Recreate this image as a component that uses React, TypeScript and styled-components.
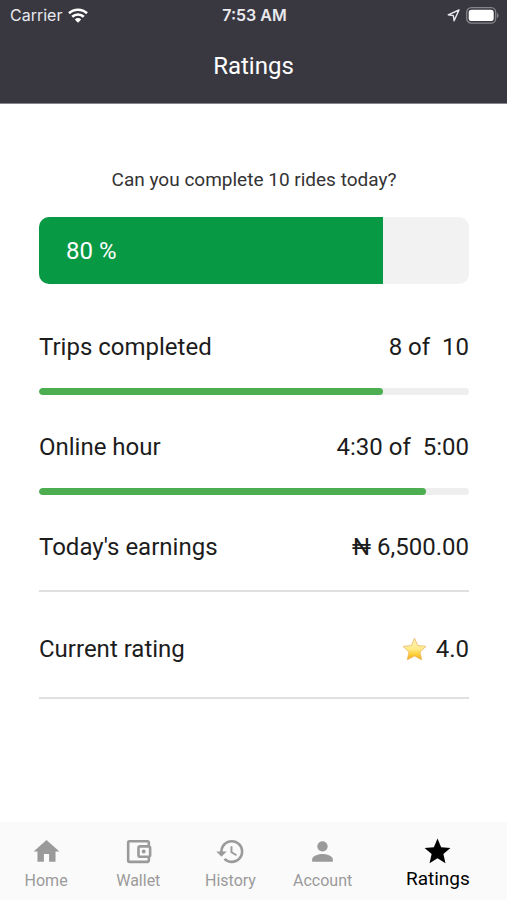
import React from "react";
import styled, { createGlobalStyle } from "styled-components";
import {
  MdHistory,
  MdHome,
  MdOutlineAccountBalanceWallet,
  MdPerson,
  MdStar,
} from "react-icons/md";

const GlobalStyle = createGlobalStyle`
  *, *::before, *::after { box-sizing: border-box; }
  body {
    margin: 0;
    background: #ffffff;
    color: #1c1c1c;
    font-family: Roboto, "Liberation Sans", sans-serif;
  }
`;

const Screen = styled.div`
  display: flex;
  flex-direction: column;
  min-height: 100vh;
`;

const Header = styled.header`
  background: #393841;
  color: #ffffff;
  border-bottom: 1px solid #85848b;
`;

const StatusBar = styled.div`
  display: grid;
  grid-template-columns: 1fr auto 1fr;
  align-items: center;
  height: 30px;
  padding: 0 8px 0 10px;
  font-family: Inter, sans-serif;
  font-size: 16px;
  line-height: 20px;
  color: #e9e9ee;
`;

const StatusGroup = styled.div<{ $end?: boolean }>`
  display: flex;
  align-items: center;
  gap: 6px;
  justify-content: ${(p) => (p.$end ? "flex-end" : "flex-start")};
`;

const Clock = styled.time`
  font-weight: 600;
`;

const Title = styled.h1`
  margin: 0;
  padding: 20px 0 21px;
  font-size: 24px;
  font-weight: 400;
  line-height: 32px;
  text-align: center;
`;

const Content = styled.main`
  flex: 1;
  padding: 64px 38px 0 39px;
`;

const Question = styled.p`
  margin: 0 0 25px;
  font-size: 19px;
  line-height: 24px;
  text-align: center;
  color: #333333;
`;

const Goal = styled.div`
  height: 67px;
  margin-bottom: 47px;
  border-radius: 10px;
  overflow: hidden;
  background: #f2f2f2;
`;

const GoalFill = styled.div`
  display: flex;
  align-items: center;
  height: 100%;
  padding-left: 27px;
  background: #089944;
  color: #ffffff;
  font-size: 24px;
`;

const Stats = styled.dl`
  margin: 0;
`;

const Stat = styled.div`
  display: flex;
  flex-wrap: wrap;
  justify-content: space-between;
  line-height: 32px;
  font-size: 24px;
  margin-bottom: 36px;
`;

const Label = styled.dt``;

const Value = styled.dd`
  display: flex;
  align-items: center;
  gap: 9px;
  margin: 0;
  white-space: pre;
`;

const Track = styled.dd`
  flex: 0 0 100%;
  height: 7px;
  margin: 25px 0 0;
  border-radius: 4px;
  overflow: hidden;
  background: #eeeeee;
`;

const TrackFill = styled.div`
  height: 100%;
  border-radius: 4px;
  background: #4cae51;
`;

const Divided = styled(Stat)<{ $gap: number }>`
  padding-bottom: ${(p) => p.$gap}px;
  margin-bottom: 41px;
  border-bottom: 2px solid #e0e0e0;
`;

const TabBar = styled.nav`
  display: flex;
  height: 78px;
  background: #fafafa;
`;

const Tab = styled.button<{ $active?: boolean }>`
  display: flex;
  flex: ${(p) => (p.$active ? 3 : 2)} 1 0;
  flex-direction: column;
  align-items: center;
  gap: ${(p) => (p.$active ? "0" : "2px")};
  min-width: 0;
  padding: 14px 0 0;
  border: 0;
  background: none;
  color: ${(p) => (p.$active ? "#000000" : "#9a9a9a")};
  font-family: inherit;
  font-size: ${(p) => (p.$active ? "19px" : "16px")};
  line-height: 24px;
  cursor: pointer;
`;

const tabs = [
  { name: "Home", Icon: MdHome },
  { name: "Wallet", Icon: MdOutlineAccountBalanceWallet },
  { name: "History", Icon: MdHistory },
  { name: "Account", Icon: MdPerson },
  { name: "Ratings", Icon: MdStar },
];

function WifiIcon() {
  return (
    <svg width="20" height="15" viewBox="0 0 20 15" fill="none" stroke="#ffffff" strokeWidth="2.6" aria-hidden="true">
      <path d="M1 5.3a13 13 0 0 1 18 0" />
      <path d="M4.2 8.8a8.4 8.4 0 0 1 11.6 0" />
      <path d="M10 14.8 6.8 11.5a4.7 4.7 0 0 1 6.4 0z" fill="#ffffff" stroke="none" />
    </svg>
  );
}

function LocationIcon() {
  return (
    <svg width="13" height="13" viewBox="0 0 13 13" fill="none" stroke="#e9e9ee" strokeWidth="1.4" strokeLinejoin="round" aria-hidden="true">
      <path d="M12 1 1.2 5.8l5.2.8.7 5.2z" />
    </svg>
  );
}

function BatteryIcon() {
  return (
    <svg width="33" height="17" viewBox="0 0 33 17" aria-hidden="true">
      <rect x="0.7" y="0.7" width="29" height="15.4" rx="4.6" fill="none" stroke="#85848b" strokeWidth="1.3" />
      <rect x="2.7" y="2.7" width="25" height="11.4" rx="2.8" fill="#ffffff" />
      <path d="M31 6v5c2-.7 2-4.3 0-5z" fill="#85848b" />
    </svg>
  );
}

function GoldStar() {
  return (
    <svg width="25" height="24" viewBox="0 0 25 24" aria-hidden="true">
      <defs>
        <linearGradient id="gold" x1="0" y1="0" x2="0" y2="1">
          <stop offset="0" stopColor="#fff3b8" />
          <stop offset="0.5" stopColor="#ffeb8a" />
          <stop offset="0.75" stopColor="#fbcf35" />
          <stop offset="1" stopColor="#eea51c" />
        </linearGradient>
      </defs>
      <path
        d="M12.5 1.2 15.7 8.5 24 9.4 18 14.9 19.7 22.8 12.5 19.1 5.3 22.8 7 14.9 1 9.4 9.3 8.5z"
        fill="url(#gold)"
        stroke="#edb863"
        strokeWidth="0.8"
        strokeLinejoin="round"
      />
    </svg>
  );
}

function ProgressStat({ label, value, percent }: { label: string; value: string; percent: number }) {
  return (
    <Stat>
      <Label>{label}</Label>
      <Value>{value}</Value>
      <Track role="progressbar" aria-label={label} aria-valuenow={percent} aria-valuemin={0} aria-valuemax={100}>
        <TrackFill style={{ width: `${percent}%` }} />
      </Track>
    </Stat>
  );
}

export default function App() {
  const goal = 80;
  return (
    <Screen>
      <GlobalStyle />
      <Header>
        <StatusBar>
          <StatusGroup>
            Carrier
            <WifiIcon />
          </StatusGroup>
          <Clock>7:53 AM</Clock>
          <StatusGroup $end>
            <LocationIcon />
            <BatteryIcon />
          </StatusGroup>
        </StatusBar>
        <Title>Ratings</Title>
      </Header>
      <Content>
        <Question id="goal">Can you complete 10 rides today?</Question>
        <Goal role="progressbar" aria-labelledby="goal" aria-valuenow={goal} aria-valuemin={0} aria-valuemax={100}>
          <GoalFill style={{ width: `${goal}%` }}>{goal} %</GoalFill>
        </Goal>
        <Stats>
          <ProgressStat label="Trips completed" value="8 of  10" percent={80} />
          <ProgressStat label="Online hour" value="4:30 of  5:00" percent={90} />
          <Divided $gap={27}>
            <Label>Today's earnings</Label>
            <Value>₦ 6,500.00</Value>
          </Divided>
          <Divided $gap={32}>
            <Label>Current rating</Label>
            <Value>
              <GoldStar />
              4.0
            </Value>
          </Divided>
        </Stats>
      </Content>
      <TabBar aria-label="Main">
        {tabs.map(({ name, Icon }) => {
          const active = name === "Ratings";
          return (
            <Tab key={name} type="button" $active={active} aria-current={active ? "page" : undefined}>
              <Icon size={31} aria-hidden="true" />
              {name}
            </Tab>
          );
        })}
      </TabBar>
    </Screen>
  );
}
